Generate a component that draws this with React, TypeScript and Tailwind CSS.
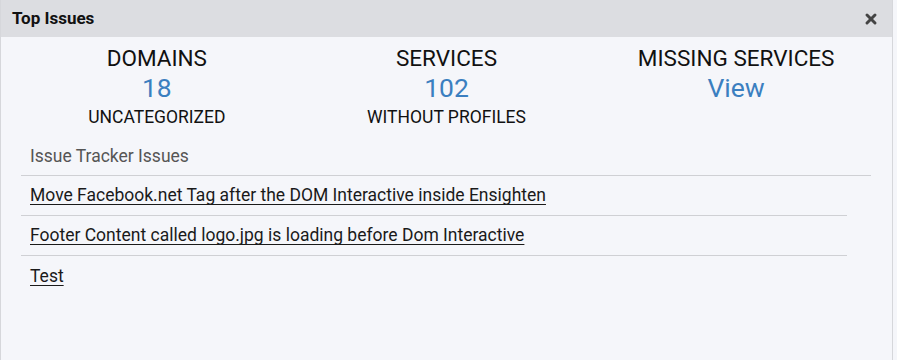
import { X } from "lucide-react";

const stats = [
  { title: "DOMAINS", value: "18", sub: "UNCATEGORIZED" },
  { title: "SERVICES", value: "102", sub: "WITHOUT PROFILES" },
  { title: "MISSING SERVICES", value: "View", sub: "" },
];

const issues = [
  "Move Facebook.net Tag after the DOM Interactive inside Ensighten",
  "Footer Content called logo.jpg is loading before Dom Interactive",
  "Test",
];

export default function App() {
  return (
    <div className="h-[360px] w-[897px] bg-[#f5f6fa] font-['Roboto',sans-serif]">
      <div className="flex h-full w-[893px] flex-col border-x border-[#d6d7db] bg-[#f5f6fa]">
        {/* header */}
        <div className="flex h-[37px] items-center justify-between bg-[#dcdde1] pl-[11px] pr-[13px]">
          <span className="text-[17px] font-bold text-[#111]">Top Issues</span>
          <X size={16} strokeWidth={4.5} className="text-[#444]" />
        </div>

        {/* stats */}
        <div className="grid grid-cols-3 px-[11px] pt-[8px]">
          {stats.map((s) => (
            <div key={s.title} className="flex flex-col items-center">
              <span className="text-[22.5px] leading-[26px] text-[#111]">{s.title}</span>
              <span className="mt-[2px] text-[26.5px] leading-[30px] text-[#3b7fc0]">{s.value}</span>
              {s.sub && <span className="mt-[2px] text-[17.5px] leading-[24px] text-[#111]">{s.sub}</span>}
            </div>
          ))}
        </div>

        {/* issue tracker list */}
        <div className="pl-[20px] pt-[16px]">
          <div className="mr-[21px] border-b border-[#cfd0d4] pb-[8px] pl-[9px] text-[17.5px] leading-[22px] text-[#555]">
            Issue Tracker Issues
          </div>
          <ul>
            {issues.map((t, i) => (
              <li
                key={t}
                className={`mr-[45px] flex h-[40px] items-center pl-[9px] ${i < 2 ? "border-b border-[#cfd0d4]" : ""}`}
              >
                <a href="#" className="text-[17.5px] text-[#1a1a1a] underline underline-offset-[3px]">
                  {t}
                </a>
              </li>
            ))}
          </ul>
        </div>
      </div>
    </div>
  );
}
